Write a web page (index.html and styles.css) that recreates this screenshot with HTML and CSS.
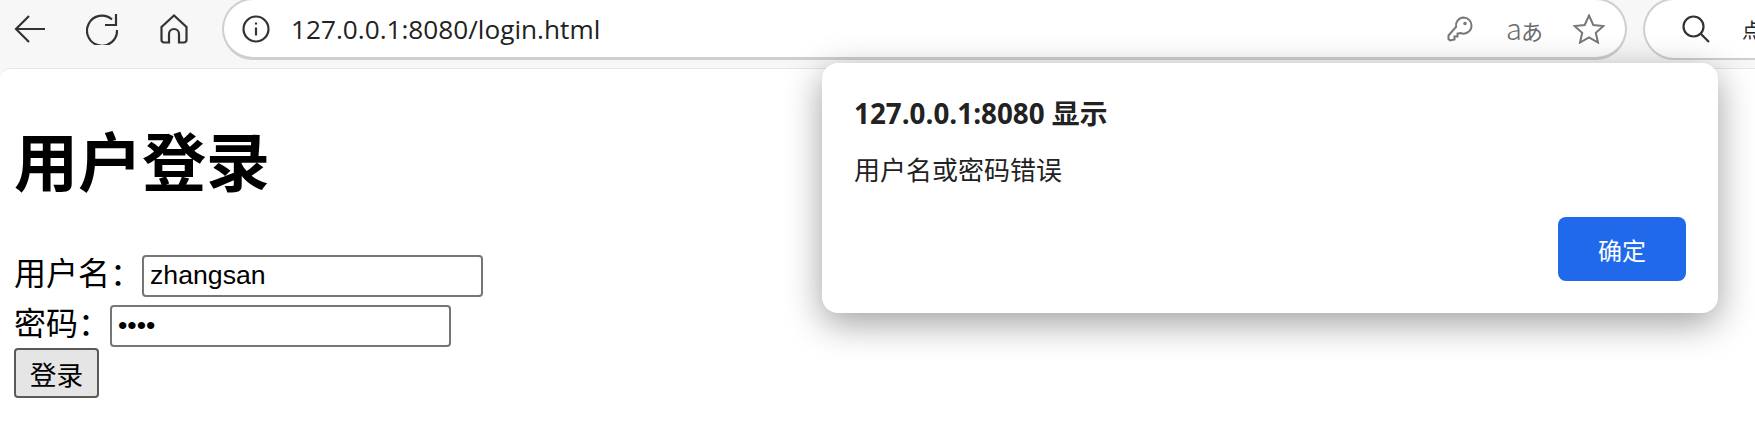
FILE: index.html
```html
<!DOCTYPE html>
<html lang="zh-CN">
<head>
    <meta charset="UTF-8">
    <meta name="viewport" content="width=device-width, initial-scale=1.0">
    <title>用户登录</title>
    <link rel="stylesheet" href="styles.css">
</head>
<body>
    <!-- Barre du navigateur -->
    <div class="toolbar">
        <svg class="icon back-icon" viewBox="0 0 32 28"><path d="M31 14H2M15 1L2 14L15 27"/></svg>
        <svg class="icon reload-icon" viewBox="0 0 32 32"><path d="M30 1V12H19M31 17A15 15 0 1 1 26 6.500"/></svg>
        <svg class="icon home-icon" viewBox="0 0 28 30"><path d="M14 1.500L1.500 13V26A2.500 2.500 0 0 0 4 28.500H9V20A5 5 0 0 1 19 20V28.500H24A2.500 2.500 0 0 0 26.500 26V13Z"/></svg>
        <div class="address-bar">
            <svg class="icon info-icon" viewBox="0 0 28 28"><circle cx="14" cy="14" r="12.500"/><path d="M14 12.500V20.500M14 7.500V9.500"/></svg>
            <span class="url">127.0.0.1:8080/login.html</span>
            <div class="address-actions">
                <svg class="icon grey key-icon" viewBox="0 0 26 26"><path d="M16.500 1.500A8 8 0 0 1 24.500 9.500A8 8 0 0 1 13.500 17L10.500 17.500V20.500H7.500V23.500L3 24.500L1.500 23V19.500L9 11A8 8 0 0 1 16.500 1.500Z"/><circle cx="18" cy="7.500" r="0.800"/></svg>
                <span class="translate-icon"><span class="translate-latin">a</span>あ</span>
                <svg class="icon grey star-icon" viewBox="0 0 32 30"><path d="M16 1.500L20.300 11L30.500 12L22.800 18.800L25 28.500L16 23.400L7 28.500L9.200 18.800L1.500 12L11.700 11Z"/></svg>
            </div>
        </div>
        <div class="search-bar">
            <svg class="icon search-icon" viewBox="0 0 28 28"><circle cx="11.500" cy="11.500" r="10"/><path d="M18.500 18.500L27 27"/></svg>
            <span class="search-text">点击</span>
        </div>
    </div>

    <!-- Page de connexion -->
    <div class="page">
        <h1>用户登录</h1>
        <form class="login-form">
            <div class="form-row">
                <label>用户名：</label>
                <input class="text-input" type="text" value="zhangsan">
            </div>
            <div class="form-row">
                <label>密码：</label>
                <input class="text-input" type="password" value="1234">
            </div>
            <button class="submit-btn" type="button">登录</button>
        </form>
    </div>

    <!-- Boite de dialogue -->
    <div class="dialog">
        <div class="dialog-title">127.0.0.1:8080 显示</div>
        <div class="dialog-text">用户名或密码错误</div>
        <div class="dialog-actions">
            <button class="ok-btn" type="button">确定</button>
        </div>
    </div>
</body>
</html>
```

FILE: styles.css
```css
html, body {
    height: 100%;
}
body {
    margin: 0;
    overflow: hidden;
    background-color: #f7f7f7;
    color: #000;
    font-family: "Liberation Sans", "Noto Sans CJK SC", sans-serif;
}
.toolbar {
    display: flex;
    align-items: center;
    box-sizing: border-box;
    width: 1755px;
    height: 68px;
    padding: 0 0 10px 14px;
}
.icon {
    display: block;
    flex: none;
    fill: none;
    stroke: #333;
    stroke-width: 2.2;
}
.icon.grey {
    stroke: #777;
    stroke-width: 2;
}
.back-icon {
    width: 32px;
    height: 28px;
}
.reload-icon {
    width: 32px;
    height: 32px;
    margin-left: 40px;
}
.home-icon {
    width: 28px;
    height: 30px;
    margin-left: 42px;
}
.address-bar {
    display: flex;
    align-items: center;
    flex: none;
    box-sizing: border-box;
    width: 1405px;
    height: 62px;
    margin-left: 34px;
    padding: 0 20px 0 18px;
    background-color: #fff;
    border: 2px solid #cfcfcf;
    border-bottom-width: 3px;
    border-radius: 31px;
}
.info-icon {
    width: 28px;
    height: 28px;
}
.url {
    margin-left: 21px;
    font-family: "Open Sans", sans-serif;
    font-size: 26.2px;
    color: #222;
}
.address-actions {
    display: flex;
    align-items: center;
    margin-left: auto;
}
.key-icon {
    width: 26px;
    height: 26px;
}
.translate-icon {
    display: flex;
    align-items: baseline;
    margin-left: 33px;
    font-family: "Noto Sans CJK JP", sans-serif;
    font-size: 22px;
    line-height: 26px;
    letter-spacing: -1px;
    color: #6b6b6b;
}
.translate-latin {
    font-size: 29px;
    font-weight: 300;
    line-height: 26px;
}
.star-icon {
    width: 32px;
    height: 30px;
    margin-left: 31px;
}
.search-bar {
    display: flex;
    align-items: center;
    flex: none;
    box-sizing: border-box;
    width: 140px;
    height: 62px;
    margin-left: 16px;
    padding-left: 37px;
    background-color: #fff;
    border: 2px solid #cfcfcf;
    border-right: none;
    border-radius: 31px 0 0 31px;
    overflow: hidden;
}
.search-icon {
    width: 28px;
    height: 28px;
}
.search-text {
    margin-left: 32px;
    font-size: 20px;
    white-space: nowrap;
    color: #222;
}
.page {
    box-sizing: border-box;
    height: 357px;
    padding-left: 14px;
    background-color: #fff;
    border-top: 1px solid #e6e6e6;
    border-top-left-radius: 10px;
}
h1 {
    margin: 52px 0 48px;
    font-size: 64px;
    line-height: 86px;
    font-weight: bold;
}
.form-row {
    display: flex;
    align-items: center;
    height: 42px;
    margin-bottom: 8px;
}
.form-row + .form-row {
    margin-bottom: 1px;
}
.form-row label {
    font-size: 32px;
    line-height: 38px;
    margin-top: -4px;
}
.text-input {
    box-sizing: border-box;
    width: 341px;
    height: 42px;
    margin: 0;
    padding: 0 6px 2px;
    border: 2px solid #767676;
    border-radius: 4px;
    font-family: "Liberation Sans", sans-serif;
    font-size: 26.67px;
    color: #000;
}
.submit-btn {
    display: block;
    box-sizing: border-box;
    width: 85px;
    height: 50px;
    padding: 0;
    background-color: #e5e5e5;
    border: 2px solid #5a5a5a;
    border-radius: 4px;
    font-family: "Noto Sans CJK SC", sans-serif;
    font-size: 26.67px;
    color: #000;
}
.dialog {
    position: absolute;
    top: 63px;
    left: 822px;
    box-sizing: border-box;
    width: 896px;
    height: 250px;
    padding: 32px;
    background-color: #fff;
    border-radius: 16px;
    box-shadow: 0 10px 36px rgba(0, 0, 0, 0.38);
    color: #222;
    font-family: "Open Sans", "Noto Sans CJK SC", sans-serif;
}
.dialog-title {
    font-size: 27.8px;
    line-height: 36px;
    font-weight: bold;
}
.dialog-text {
    margin-top: 19px;
    font-size: 26px;
    line-height: 38px;
    font-family: "Noto Sans CJK SC", sans-serif;
}
.dialog-actions {
    display: flex;
    justify-content: flex-end;
    margin-top: 29px;
}
.ok-btn {
    width: 128px;
    height: 64px;
    padding: 0;
    background-color: #2169eb;
    border: none;
    border-radius: 8px;
    color: #fff;
    font-family: "Noto Sans CJK SC", sans-serif;
    font-size: 24px;
}
```
